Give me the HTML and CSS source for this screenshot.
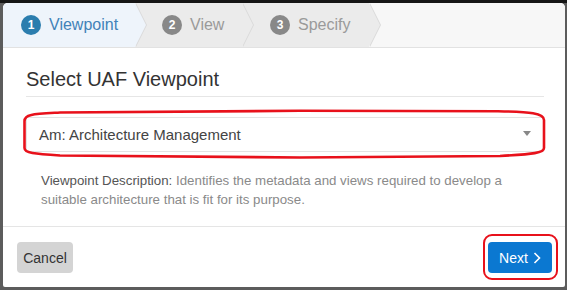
FILE: index.html
```html
<!DOCTYPE html>
<html lang="en">
<head>
<meta charset="utf-8">
<title>Select UAF Viewpoint</title>
<link rel="stylesheet" href="styles.css">
</head>
<body>
<div class="modal">
  <div class="steps">
    <div class="step step-active"><span class="num">1</span><span class="label">Viewpoint</span></div>
    <div class="step"><span class="num">2</span><span class="label">View</span></div>
    <div class="step"><span class="num">3</span><span class="label">Specify</span></div>
    <div class="steps-rest"></div>
  </div>
  <div class="body">
    <h2 class="title">Select UAF Viewpoint</h2>
    <div class="select-wrap">
      <div class="select">
        <span class="select-value">Am: Architecture Management</span>
        <span class="caret"></span>
      </div>
      <svg class="ring" viewBox="18 106 532 57" width="532" height="57" aria-hidden="true">
        <path d="M 24.5 121 C 24.5 114, 34 114, 60 112.5 L 300 110.8 L 498 111.2 C 530 112, 544 113, 544 120 L 544 148 C 544 153, 534 154, 500 156 L 300 157.5 L 60 155.5 C 34 154, 24.5 153, 24.5 148 Z" fill="none" stroke="#e8111b" stroke-width="2.6"/>
      </svg>
    </div>
    <p class="desc">Viewpoint Description: <span class="desc-text">Identifies the metadata and views required to develop a suitable architecture that is fit for its purpose.</span></p>
  </div>
  <div class="footer">
    <button class="btn btn-cancel" type="button">Cancel</button>
    <div class="next-wrap">
      <button class="btn btn-next" type="button">Next <svg class="chev" viewBox="0 0 8 12" width="8" height="12" aria-hidden="true"><path d="M1.5 1 L6.5 6 L1.5 11" fill="none" stroke="#fff" stroke-width="1.6"/></svg></button>
      <span class="next-ring"></span>
    </div>
  </div>
</div>
</body>
</html>
```
FILE: styles.css
```css
html, body {
  margin: 0;
  padding: 0;
}
body {
  width: 567px;
  height: 290px;
  overflow: hidden;
  background: linear-gradient(#161616 0 3px, #5c5c5c 3px);
  font-family: "Liberation Sans", Arial, sans-serif;
}
.modal {
  margin: 3px 2px 0 3px;
  width: 562px;
  height: 284px;
  background: #fff;
  border-radius: 5px 5px 2px 2px;
  overflow: hidden;
  display: flex;
  flex-direction: column;
}
.steps {
  display: flex;
  height: 44px;
  border-bottom: 1px solid #e2e2e2;
  background: #f7f7f7;
  flex: none;
}
.step {
  position: relative;
  display: flex;
  align-items: center;
  background: #ebebeb;
  flex: none;
  font-size: 16px;
  color: #9a9a9a;
}
.step:nth-child(1) { width: 132px; padding-left: 18px; box-sizing: border-box; }
.step:nth-child(2) { width: 107px; padding-left: 27px; box-sizing: border-box; }
.step:nth-child(3) { width: 127px; padding-left: 28px; box-sizing: border-box; }
.step::before,
.step::after {
  content: "";
  position: absolute;
  top: 0;
  height: 100%;
  width: 11px;
  clip-path: polygon(0 0, 100% 50%, 0 100%);
}
.step::before {
  left: calc(100% + 1px);
  background: #dadada;
  z-index: 2;
}
.step::after {
  left: 100%;
  background: #ebebeb;
  z-index: 3;
}
.step-active {
  background: #eef4fb;
  color: #4282b8;
}
.step-active::after {
  background: #eef4fb;
}
.steps-rest {
  flex: 1;
  background: #f7f7f7;
}
.num {
  width: 20px;
  height: 20px;
  border-radius: 50%;
  background: #888;
  color: #fff;
  font-size: 12px;
  font-weight: bold;
  display: flex;
  align-items: center;
  justify-content: center;
  margin-right: 8px;
  flex: none;
}
.step-active .num {
  background: #2b7dae;
}
.label {
  line-height: 20px;
}
.body {
  flex: 1;
  padding: 20px 21px 0 23px;
  border-bottom: 1px solid #e5e5e5;
}
.title {
  margin: 0;
  font-size: 20px;
  font-weight: normal;
  line-height: 22px;
  color: #333;
  padding-bottom: 6px;
  border-bottom: 1px solid #e6e6e6;
}
.select-wrap {
  position: relative;
  margin-top: 20px;
}
.select {
  height: 35px;
  box-sizing: border-box;
  border: 1px solid #e3e3e3;
  display: flex;
  align-items: center;
  justify-content: space-between;
  padding: 0 12px 0 12px;
  font-size: 15px;
  color: #444;
}
.caret {
  width: 0;
  height: 0;
  border-left: 4px solid transparent;
  border-right: 4px solid transparent;
  border-top: 5px solid #888;
  margin-top: -2px;
}
.ring {
  position: absolute;
  left: -8px;
  top: -11px;
  pointer-events: none;
}
.desc {
  margin: 19px 20px 0 15px;
  font-size: 13.3px;
  line-height: 19px;
  color: #555;
}
.desc-text {
  color: #8a8a8a;
}
.footer {
  flex: none;
  display: flex;
  justify-content: space-between;
  align-items: center;
  padding: 15px 13px 14px 14px;
}
.btn {
  height: 31px;
  border: none;
  border-radius: 4px;
  font-family: "Liberation Sans", Arial, sans-serif;
  font-size: 14px;
  padding: 0;
  display: flex;
  align-items: center;
  justify-content: center;
}
.btn-cancel {
  width: 56px;
  background: #d4d4d4;
  color: #333;
}
.next-wrap {
  position: relative;
}
.btn-next {
  width: 64px;
  background: #0b78d1;
  color: #fff;
  gap: 5px;
}
.chev {
  display: block;
}
.next-ring {
  position: absolute;
  left: -5px;
  right: -6px;
  top: -8px;
  bottom: -7px;
  border: 2.5px solid #e8111b;
  border-radius: 9px;
  pointer-events: none;
}
```
